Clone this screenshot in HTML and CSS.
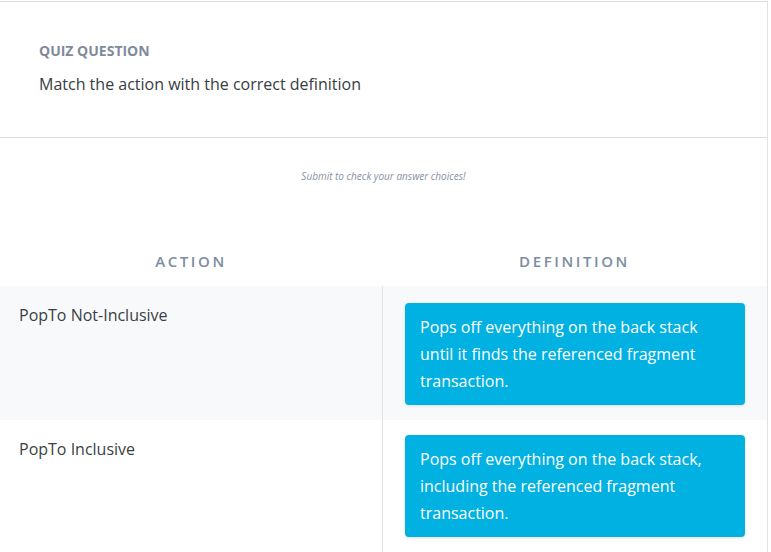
FILE: index.html
```html
<!DOCTYPE html>
<html>
<head>
<meta charset="utf-8">
<link rel="stylesheet" href="styles.css">
</head>
<body>
<div class="panel">
  <div class="header">
    <div class="label">QUIZ QUESTION</div>
    <div class="question">Match the action with the correct definition</div>
  </div>
  <div class="hint">Submit to check your answer choices!</div>
  <div class="cols">
    <div class="colhead">ACTION</div>
    <div class="colhead">DEFINITION</div>
  </div>
  <div class="row shaded">
    <div class="action">PopTo Not-Inclusive</div>
    <div class="def"><div class="card">Pops off everything on the back stack until it finds the referenced fragment transaction.</div></div>
  </div>
  <div class="row last">
    <div class="action">PopTo Inclusive</div>
    <div class="def"><div class="card">Pops off everything on the back stack, including the referenced fragment transaction.</div></div>
  </div>
</div>
</body>
</html>
```
FILE: styles.css
```css
html, body { margin: 0; padding: 0; background: #fff; }
body { font-family: "Open Sans", "Liberation Sans", sans-serif; width: 771px; height: 552px; overflow: hidden; }
.panel {
  width: 768px;
  height: 551px;
  margin-top: 1px;
  border-top: 1px solid #dcdcdc;
  border-right: 1px solid #e2e2e2;
  box-sizing: border-box;
  display: flex;
  flex-direction: column;
}
.header {
  padding: 40px 39px 0;
  height: 136px;
  flex: none;
  box-sizing: border-box;
  border-bottom: 1px solid #dddddd;
}
.label { font-size: 14px; font-weight: 700; color: #7f8b9c; line-height: 18px; }
.question { font-size: 16px; color: #383d42; margin-top: 13px; line-height: 22px; }
.hint { text-align: center; font-size: 10px; font-style: italic; color: #8792a3; padding-top: 31px; line-height: 14px; }
.cols { display: grid; grid-template-columns: 382px 1fr; margin-top: 68px; height: 35px; flex: none; }
.colhead { text-align: center; font-size: 15px; font-weight: 600; letter-spacing: 2.6px; color: #7b8da2; line-height: 20px; }
.row { display: grid; grid-template-columns: 382px 1fr; flex: none; }
.shaded { background: #f7f9fb; }
.last { flex: 1 1 auto; }
.action { padding: 18px 19px; font-size: 16px; color: #3b3f44; line-height: 22px; }
.def { border-left: 1px solid #e3e3e3; padding: 17px 22px 15px 22px; }
.last .def { padding-top: 15px; }
.card {
  background: #00b1e2;
  color: #fff;
  border-radius: 4px;
  padding: 11px 15px 10px;
  font-size: 16px;
  line-height: 27px;
  box-shadow: 0 1px 3px rgba(0,0,0,0.12);
}
```
